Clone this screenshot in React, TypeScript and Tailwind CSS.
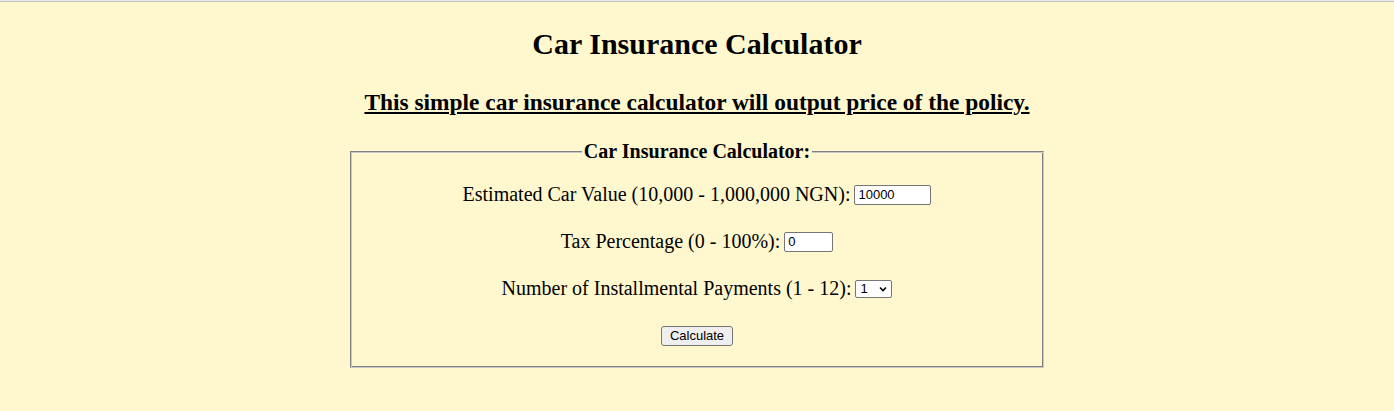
import React from "react";

export default function App() {
  return (
    <div className="min-h-[411px] bg-[#fff8cf] text-black" style={{ fontFamily: '"Liberation Serif", "Times New Roman", serif' }}>
      <div className="h-[2px] border-b border-[#c4c4c4] bg-[#e8e8e8]" />
      <div className="flex flex-col items-center pt-[25px]">
        <h1 className="text-[30px] font-bold leading-[34px]">Car Insurance Calculator</h1>
        <h2 className="mt-[27px] text-[23.4px] font-bold leading-[28px] underline">
          This simple car insurance calculator will output price of the policy.
        </h2>
      </div>
      <fieldset className="mx-auto mt-[24px] w-[694px] border border-t-[#808080] border-l-[#808080] border-b-[#c8c8c8] border-r-[#c8c8c8] shadow-[inset_1px_1px_0_#c8c8c8,inset_-1px_-1px_0_#808080] px-3 pb-[21px]">
        <legend className="mx-auto bg-[#fff8cf] px-[2px] text-[20px] font-bold leading-[22px]">Car Insurance Calculator:</legend>
        <div className="flex flex-col items-center text-[20px] leading-[23px]">
          <div className="mt-[21px] flex items-center gap-1">
            <span>Estimated Car Value (10,000 - 1,000,000 NGN):</span>
            <input
              defaultValue="10000"
              className="h-[20px] w-[77px] rounded-[2px] border border-[#767676] bg-white px-[3px] text-[13px] outline-none"
              style={{ fontFamily: '"Liberation Sans", Arial, sans-serif' }}
            />
          </div>
          <div className="mt-[24px] flex items-center gap-1">
            <span>Tax Percentage (0 - 100%):</span>
            <input
              defaultValue="0"
              className="h-[20px] w-[49px] rounded-[2px] border border-[#767676] bg-white px-[3px] text-[13px] outline-none"
              style={{ fontFamily: '"Liberation Sans", Arial, sans-serif' }}
            />
          </div>
          <div className="mt-[24px] flex items-center gap-1">
            <span>Number of Installmental Payments (1 - 12):</span>
            <div
              className="flex h-[18px] w-[37px] items-center justify-between rounded-[2px] border border-[#767676] bg-white pl-[4px] pr-[3px] text-[13px]"
              style={{ fontFamily: '"Liberation Sans", Arial, sans-serif' }}
            >
              <span>1</span>
              <svg width="10" height="10" viewBox="0 0 10 10">
                <path d="M2 3.5 L5 6.5 L8 3.5" fill="none" stroke="black" strokeWidth="1.6" />
              </svg>
            </div>
          </div>
          <div className="mt-[26px] flex items-center">
            <button
              className="h-[20px] rounded-[3px] border border-[#767676] bg-[#efefef] px-[8px] text-[13px] leading-[18px]"
              style={{ fontFamily: '"Liberation Sans", Arial, sans-serif' }}
            >
              Calculate
            </button>
          </div>
        </div>
      </fieldset>
    </div>
  );
}
